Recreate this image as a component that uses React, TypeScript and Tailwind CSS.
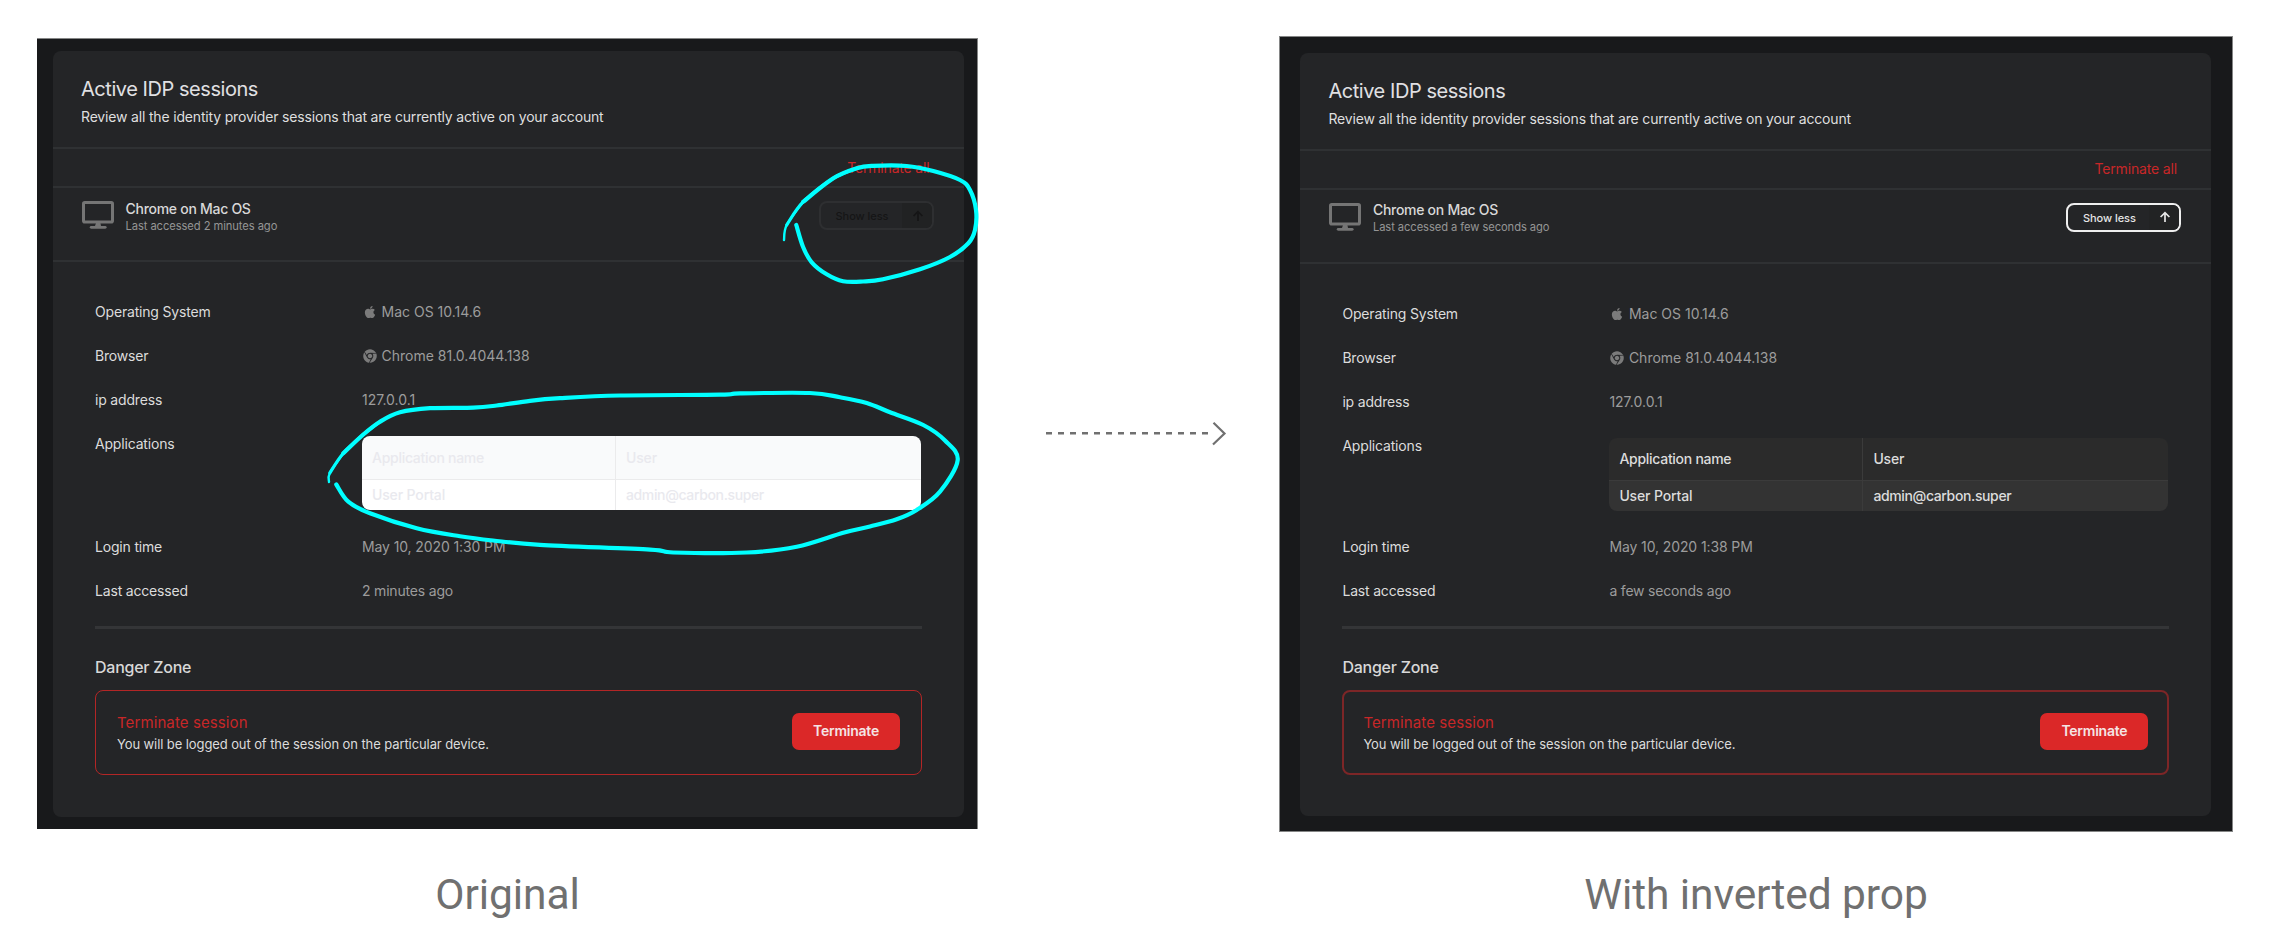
import React from "react";
import { FaApple, FaChrome } from "react-icons/fa";
import clsx from "clsx";

type Point = [number, number];

interface Session {
  accessed: string;
  loginTime: string;
  inverted: boolean;
}

/** Smooth curve through a list of points (Catmull-Rom converted to cubic Béziers). */
function smooth(points: Point[]): string {
  let d = `M${points[0][0]} ${points[0][1]}`;
  for (let i = 0; i < points.length - 1; i++) {
    const p0 = points[Math.max(0, i - 1)];
    const p1 = points[i];
    const p2 = points[i + 1];
    const p3 = points[Math.min(points.length - 1, i + 2)];
    d += ` C${p1[0] + (p2[0] - p0[0]) / 6} ${p1[1] + (p2[1] - p0[1]) / 6} ${p2[0] - (p3[0] - p1[0]) / 6} ${p2[1] - (p3[1] - p1[1]) / 6} ${p2[0]} ${p2[1]}`;
  }
  return d;
}

const buttonLoop: Point[] = [
  [784, 240], [786.7, 225], [803.3, 201.7], [833.3, 178.3], [856.7, 168.3], [873, 165.9], [906.7, 166],
  [933.3, 171], [960, 180], [970, 190], [976, 210], [975, 230], [968.3, 243.3], [950, 257], [920, 269.3],
  [883, 279.3], [863, 281.5], [843, 281.2], [826.7, 274.3], [811.7, 262.3], [803, 246.7], [796.3, 225],
];

const tableLoop: Point[] = [
  [329, 482], [329.8, 473], [343.3, 453.3], [363.3, 434.5], [380, 421.7], [400, 412.3], [430, 408.2],
  [473.3, 407.6], [496.7, 405.5], [530, 400.8], [560, 398.2], [620, 395.5], [720, 394.7], [740, 393.4],
  [810, 393], [840, 397.3], [866.7, 403], [890, 412.3], [923.3, 425], [945, 440.5], [957.7, 460],
  [940, 491.7], [916.7, 510], [896.7, 519.3], [870, 526.5], [843.3, 532.7], [796.7, 546.7], [746.7, 552.5],
  [673.3, 552.5], [650, 549.6], [540, 544.8], [493, 540.5], [460, 536.3], [416.7, 528.3], [370, 513.3],
  [348.3, 501.7], [336.3, 484.5],
];

function Scribble({ points, thinCount }: { points: Point[]; thinCount: number }) {
  return (
    <>
      <path d={smooth(points.slice(0, thinCount))} strokeWidth={2.4} />
      <path d={smooth(points.slice(1, thinCount + 2))} strokeWidth={3.2} />
      <path d={smooth(points.slice(thinCount - 1))} strokeWidth={4.2} />
    </>
  );
}

function MonitorIcon() {
  return (
    <svg className="h-7 w-8 shrink-0" viewBox="0 0 32 28" fill="none" stroke="#757575">
      <rect x="1.5" y="1.5" width="29" height="19.5" rx="1.3" strokeWidth="3" />
      <path d="M14 22h4.4l.6 3h-6z" fill="#757575" stroke="none" />
      <path d="M9.2 26.3h14" strokeWidth="2.8" strokeLinecap="round" />
    </svg>
  );
}

function ShowLess({ inverted }: { inverted: boolean }) {
  return (
    <button
      className={clsx(
        "flex h-[29px] w-[115px] overflow-hidden rounded-[8px] border-2 text-[11px] font-medium tracking-[-0.04px]",
        inverted ? "border-[#efefef] text-[#e6e6e6]" : "border-[#2e2f31] text-[#151516]",
      )}
    >
      <span className="flex h-full w-[81px] items-center pt-0.5 pl-[14.5px] whitespace-nowrap">Show less</span>
      <span className={clsx("flex h-full flex-1 items-center justify-center", inverted ? "bg-[#222324]" : "bg-[#212223]")}>
        <svg className="ml-0.5 size-3" viewBox="0 0 12 12" fill="none" stroke="currentColor" strokeWidth="1.7">
          <path d="M6 11V2M1.6 6 6 1.6 10.4 6" />
        </svg>
      </span>
    </button>
  );
}

function AppTable({ inverted }: { inverted: boolean }) {
  const line = inverted ? "border-[#3b3b3b]" : "border-[#ebebec]";
  const cell = "flex items-center text-sm font-medium leading-5";
  return (
    <div
      className={clsx(
        "mt-[14px] grid w-[558.5px] grid-cols-[253px_1fr] overflow-hidden rounded-[8px]",
        inverted ? "h-[73px] grid-rows-[43px_1fr] text-[#dcdcdc]" : "h-[74px] grid-rows-[44px_1fr] text-[#e9e9ee]",
      )}
    >
      <div className={clsx(cell, line, "border-b pl-[10px] tracking-[-0.28px]", inverted ? "bg-[#2b2b2b]" : "bg-[#f9fafb]")}>
        Application name
      </div>
      <div className={clsx(cell, line, "border-b border-l pl-[10px] tracking-[-0.14px]", inverted ? "bg-[#2b2b2b]" : "bg-[#f9fafb]")}>
        User
      </div>
      <div className={clsx(cell, "pl-[10px] tracking-[-0.14px]", inverted ? "bg-[#333333]" : "bg-white")}>User Portal</div>
      <div className={clsx(cell, line, "border-l pl-[10px] tracking-[-0.37px]", inverted ? "bg-[#333333]" : "bg-white")}>
        admin@carbon.super
      </div>
    </div>
  );
}

function Row({ label, children }: { label: string; children: React.ReactNode }) {
  return (
    <div className="flex h-11 items-center text-sm leading-5">
      <div className="w-[267px] tracking-[-0.18px] text-[#dcdcdc]">{label}</div>
      <div className="flex items-center text-[#9c9c9c]">{children}</div>
    </div>
  );
}

function SessionCard({ accessed, loginTime, inverted }: Session) {
  return (
    <section
      className={clsx("w-[911px] rounded-[8px] bg-[#242527]", inverted ? "h-[763.5px]" : "h-[766px]")}
    >
      <header className="h-[98px] border-b-2 border-[#2f3133] pt-[24px] pl-[28px]">
        <h2 className="text-[20px] leading-7 tracking-[-0.45px] text-[#e0e0e3]">Active IDP sessions</h2>
        <p className="mt-[4px] text-sm leading-5 tracking-[-0.172px] text-[#dfdfdf]">
          Review all the identity provider sessions that are currently active on your account
        </p>
      </header>
      <div className="flex h-[39px] items-center justify-end border-b-2 border-[#2f3133] pr-[34.5px]">
        <a className="text-sm leading-5 tracking-[-0.17px] text-[#c82728]">Terminate all</a>
      </div>
      <div className="flex h-[74px] items-start border-b-2 border-[#2f3133] pr-[30px] pl-[28.5px]">
        <div className="mt-[13px]">
          <MonitorIcon />
        </div>
        <div className="mt-[10.5px] ml-[12px] flex-1">
          <div className="text-sm leading-5 font-medium tracking-[-0.28px] text-[#d8d8d8]">Chrome on Mac OS</div>
          <div className="text-[11.2px] leading-[14px] tracking-[-0.08px] text-[#959595]">Last accessed {accessed}</div>
        </div>
        <div className="mt-[13px]">
          <ShowLess inverted={inverted} />
        </div>
      </div>
      <div className="pt-7 pr-[42px] pl-[42px]">
        <Row label="Operating System">
          <FaApple className="mr-[4.5px] ml-px size-[14px] text-[#7b7b7b]" />
          Mac OS 10.14.6
        </Row>
        <Row label="Browser">
          <FaChrome className="mr-[4.5px] ml-px size-[14px] text-[#7b7b7b]" />
          Chrome 81.0.4044.138
        </Row>
        <Row label="ip address">127.0.0.1</Row>
        <div className={clsx("flex items-start", inverted ? "h-[101.5px]" : "h-[103px]")}>
          <div className="flex h-11 w-[267px] items-center text-sm leading-5 tracking-[-0.18px] text-[#dcdcdc]">Applications</div>
          <AppTable inverted={inverted} />
        </div>
        <Row label="Login time">
          <span className="tracking-[-0.11px]">{loginTime}</span>
        </Row>
        <Row label="Last accessed">
          <span className="tracking-[-0.19px]">{accessed}</span>
        </Row>
        <hr className="mt-[13px] h-[3px] border-0 bg-[#343537]" />
        <h3 className="mt-[25.5px] text-[16px] leading-6 font-medium tracking-[-0.25px] text-[#d8d8d8]">Danger Zone</h3>
        <div
          className={clsx(
            "mt-[11.5px] flex h-[85px] items-center justify-between rounded-[8px]",
            inverted ? "border-2 border-[#7d2627] px-[19px]" : "border border-[#b32626] px-[21px]",
          )}
        >
          <div className="pt-px">
            <div className="text-[15px] leading-[22px] tracking-[0.1px] text-[#c82728]">Terminate session</div>
            <div className="text-[13px] leading-5 tracking-[-0.096px] text-[#dcdcdc]">
              You will be logged out of the session on the particular device.
            </div>
          </div>
          <button className="mb-[3px] h-[37px] w-[108px] rounded-[7px] bg-[#db2828] text-sm font-semibold tracking-[-0.23px] text-[#f4e4e4]">
            Terminate
          </button>
        </div>
      </div>
    </section>
  );
}

function DashedArrow() {
  return (
    <svg className="h-7 w-[184px]" viewBox="0 0 184 28" fill="none" stroke="#707070" strokeWidth="2.4">
      <path d="M2 14.3h165" strokeDasharray="6 6" />
      <path d="M169.5 3.7 180.5 14.5 169 25.5" strokeWidth="2.2" />
    </svg>
  );
}

function Caption({ children }: { children: React.ReactNode }) {
  return (
    <figcaption className="font-['Roboto',sans-serif] text-[42.5px] leading-[50px] tracking-[-0.08px] text-[#707070]">
      {children}
    </figcaption>
  );
}

export default function App() {
  return (
    <main className="relative flex h-[947px] w-[2270px] items-start overflow-hidden bg-white pl-[37px] font-['Inter',sans-serif]">
      <figure className="mt-[38px] flex w-[941px] flex-col items-center">
        <div className="h-[791px] w-full border-t border-r border-[#858686] bg-[#18191b] pt-[12px] pl-[16px]">
          <SessionCard accessed="2 minutes ago" loginTime="May 10, 2020 1:30 PM" inverted={false} />
        </div>
        <div className="mt-[40.5px]">
          <Caption>Original</Caption>
        </div>
      </figure>
      <div className="mt-[419px] ml-[66px] w-[184px]">
        <DashedArrow />
      </div>
      <figure className="mt-[36px] ml-[51px] flex w-[954px] flex-col items-center">
        <div className="h-[796px] w-full border border-[#858686] bg-[#18191b] pt-[15.5px] pl-[20.4px]">
          <SessionCard accessed="a few seconds ago" loginTime="May 10, 2020 1:38 PM" inverted />
        </div>
        <div className="mt-[37.5px]">
          <Caption>With inverted prop</Caption>
        </div>
      </figure>
      <svg
        className="pointer-events-none absolute top-0 left-0 h-[600px] w-[1000px]"
        viewBox="0 0 1000 600"
        fill="none"
        stroke="#00ffff"
        strokeLinecap="round"
        strokeLinejoin="round"
      >
        <Scribble points={buttonLoop} thinCount={3} />
        <Scribble points={tableLoop} thinCount={3} />
      </svg>
    </main>
  );
}
